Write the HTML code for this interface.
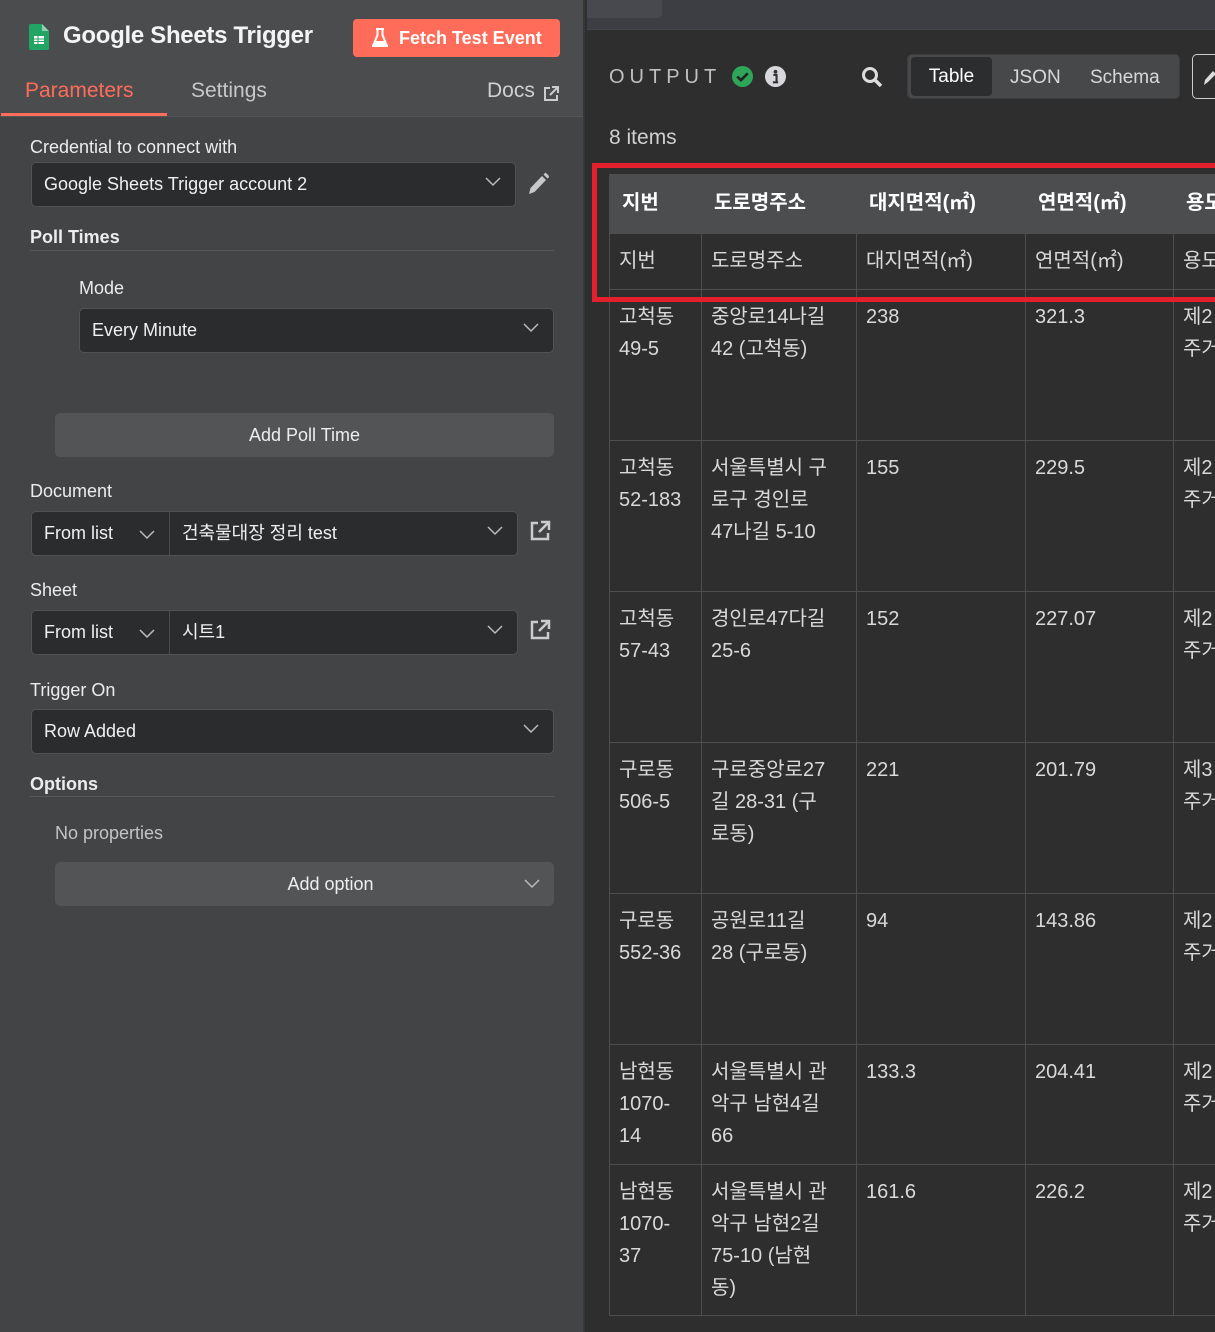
<!DOCTYPE html>
<html><head><meta charset="utf-8">
<style>
*{box-sizing:border-box;margin:0;padding:0}
body{width:1215px;height:1332px;overflow:hidden;background:#2e2e2f;font-family:"Liberation Sans","Noto Sans CJK KR",sans-serif;color:#e8e8e8;position:relative}
.a{position:absolute}
#left{left:0;top:0;width:585px;height:1332px;background:#424446;border-right:2px solid #37383a}
#head{left:0;top:0;width:583px;height:117px;background:#4a4c4e;border-bottom:1px solid #555}
.lbl{font-size:18px;color:#ececec}
.b{font-weight:bold}
.inp{background:#2b2c2d;border:1px solid #505254;border-radius:5px;height:45px;font-size:18px;color:#f0f0f0;padding-left:12px;line-height:43px}
.chev{position:absolute;right:14px;top:14px;width:16px;height:10px}
.btn{background:#525456;border-radius:5px;height:44px;font-size:18px;color:#eee;text-align:center;line-height:44px}
.hr{height:1px;background:#57595b}
table{border-collapse:collapse;font-size:20px;color:#d9d9d9;table-layout:fixed}
td{border:1px solid #4c4e50;vertical-align:top;padding:11px 9px 0 9px;line-height:32px;overflow:hidden;white-space:nowrap}
tr.h td{background:#4b4d4f;font-weight:bold;color:#fff;padding:12px 12px 0;height:59px;border-color:#4b4d4f}
tr.s td{height:56px}
</style></head><body>
<div id="left" class="a"></div>
<div id="head" class="a"></div>
<svg class="a" style="left:29px;top:24px" width="20" height="26" viewBox="0 0 20 26"><path d="M0 2a2 2 0 0 1 2-2h11l7 7v17a2 2 0 0 1-2 2H2a2 2 0 0 1-2-2z" fill="#21a464"/><path d="M13 0v7h7z" fill="#8ed1b1"/><rect x="5" y="12" width="10" height="8" fill="#fff"/><path d="M5 15h10M5 17.5h10M9 12v8" stroke="#21a464" stroke-width="1"/></svg>
<div class="a" style="left:63px;top:22px;font-size:24px;font-weight:bold;color:#f4f4f4;letter-spacing:-0.3px">Google Sheets Trigger</div>
<div class="a" style="left:353px;top:19px;width:207px;height:38px;background:#ff6d5a;border-radius:4px;color:#fff;font-size:18px;font-weight:bold;line-height:38px;padding-left:46px">Fetch Test Event</div>
<svg class="a" style="left:372px;top:28px" width="16" height="20" viewBox="0 0 16 20"><path d="M4 1h8M5.5 1v6L1 18h14L10.5 7V1" fill="none" stroke="#fff" stroke-width="2"/><path d="M3 13h10l2 5H1z" fill="#fff"/></svg>
<div class="a" style="left:25px;top:79px;font-size:21px;color:#ff6d5a">Parameters</div>
<div class="a" style="left:1px;top:113px;width:166px;height:3px;background:#ff6d5a"></div>
<div class="a" style="left:191px;top:79px;font-size:21px;color:#c8c8ca">Settings</div>
<div class="a" style="left:487px;top:79px;font-size:21px;color:#d0d0d2">Docs</div>
<svg class="a" style="left:543px;top:85px" width="17" height="17" viewBox="0 0 17 17"><path d="M7 3H2v12h12v-5M9 2h6v6M15 2L7 10" fill="none" stroke="#ccc" stroke-width="2"/></svg>

<div class="a lbl" style="left:30px;top:137px">Credential to connect with</div>
<div class="a inp" style="left:31px;top:162px;width:485px">Google Sheets Trigger account 2<svg class="chev" viewBox="0 0 16 10"><path d="M1 1l7 7 7-7" fill="none" stroke="#bbb" stroke-width="1.5"/></svg></div>
<svg class="a" style="left:527px;top:172px" width="22" height="24" viewBox="0 0 22 24"><path d="M2 22l1.5-6L15 4l4 4L7.5 20z M16.5 2.5l2-2 4 4-2 2z" fill="#c8c8ca"/></svg>
<div class="a lbl b" style="left:30px;top:227px">Poll Times</div>
<div class="a hr" style="left:30px;top:250px;width:524px"></div>
<div class="a lbl" style="left:79px;top:278px">Mode</div>
<div class="a inp" style="left:79px;top:308px;width:475px">Every Minute<svg class="chev" viewBox="0 0 16 10"><path d="M1 1l7 7 7-7" fill="none" stroke="#bbb" stroke-width="1.5"/></svg></div>
<div class="a btn" style="left:55px;top:413px;width:499px">Add Poll Time</div>

<div class="a lbl" style="left:30px;top:481px">Document</div>
<div class="a inp" style="left:31px;top:511px;width:487px;padding:0"><span style="position:absolute;left:12px">From list</span><svg class="a" style="left:107px;top:18px" width="16" height="10" viewBox="0 0 16 10"><path d="M1 1l7 7 7-7" fill="none" stroke="#bbb" stroke-width="1.5"/></svg><div class="a" style="left:137px;top:0;width:1px;height:43px;background:#4a4c4e"></div><span style="position:absolute;left:150px">건축물대장 정리 test</span><svg class="chev" viewBox="0 0 16 10"><path d="M1 1l7 7 7-7" fill="none" stroke="#bbb" stroke-width="1.5"/></svg></div>
<svg class="a" style="left:529px;top:520px" width="22" height="22" viewBox="0 0 22 22"><path d="M9 3H3v16h16v-6M12 2h8v8M20 2L10 12" fill="none" stroke="#ccc" stroke-width="2.5"/></svg>
<div class="a lbl" style="left:30px;top:580px">Sheet</div>
<div class="a inp" style="left:31px;top:610px;width:487px;padding:0"><span style="position:absolute;left:12px">From list</span><svg class="a" style="left:107px;top:18px" width="16" height="10" viewBox="0 0 16 10"><path d="M1 1l7 7 7-7" fill="none" stroke="#bbb" stroke-width="1.5"/></svg><div class="a" style="left:137px;top:0;width:1px;height:43px;background:#4a4c4e"></div><span style="position:absolute;left:150px">시트1</span><svg class="chev" viewBox="0 0 16 10"><path d="M1 1l7 7 7-7" fill="none" stroke="#bbb" stroke-width="1.5"/></svg></div>
<svg class="a" style="left:529px;top:619px" width="22" height="22" viewBox="0 0 22 22"><path d="M9 3H3v16h16v-6M12 2h8v8M20 2L10 12" fill="none" stroke="#ccc" stroke-width="2.5"/></svg>
<div class="a lbl" style="left:30px;top:680px">Trigger On</div>
<div class="a inp" style="left:31px;top:709px;width:523px">Row Added<svg class="chev" viewBox="0 0 16 10"><path d="M1 1l7 7 7-7" fill="none" stroke="#bbb" stroke-width="1.5"/></svg></div>
<div class="a lbl b" style="left:30px;top:774px">Options</div>
<div class="a hr" style="left:30px;top:796px;width:524px"></div>
<div class="a" style="left:55px;top:823px;font-size:18px;color:#c4c4c4">No properties</div>
<div class="a btn" style="left:55px;top:862px;width:499px;padding-left:52px">Add option<svg class="a" style="right:14px;top:17px" width="16" height="10" viewBox="0 0 16 10"><path d="M1 1l7 7 7-7" fill="none" stroke="#bbb" stroke-width="1.5"/></svg></div>

<!-- right -->
<div class="a" style="left:587px;top:0;width:628px;height:30px;background:#3d3d44;border-bottom:1px solid #46464c"></div>
<div class="a" style="left:587px;top:0;width:75px;height:18px;background:#48484f;border-radius:0 0 4px 0"></div>
<div class="a" style="left:609px;top:66px;font-size:20px;letter-spacing:5px;color:#c0c0c0">OUTPUT</div>
<svg class="a" style="left:732px;top:66px" width="21" height="21" viewBox="0 0 20 20"><circle cx="10" cy="10" r="10" fill="#2ea65a"/><path d="M5 10l3.5 3.5L15 7" fill="none" stroke="#222" stroke-width="2.5"/></svg>
<svg class="a" style="left:765px;top:66px" width="21" height="21" viewBox="0 0 20 20"><circle cx="10" cy="10" r="10" fill="#d8d8dc"/><circle cx="10" cy="5.5" r="1.8" fill="#333"/><path d="M8 8.5h3v7h1.5M7.5 15.5h5" stroke="#333" stroke-width="2" fill="none"/></svg>
<svg class="a" style="left:861px;top:66px" width="22" height="22" viewBox="0 0 22 22"><circle cx="9" cy="9" r="6.5" fill="none" stroke="#ddd" stroke-width="3"/><path d="M14 14l6 6" stroke="#ddd" stroke-width="3.5"/></svg>
<div class="a" style="left:907px;top:54px;width:273px;height:45px;background:#474849;border-radius:5px;border:1px solid #3c3d3e"></div>
<div class="a" style="left:911px;top:57px;width:81px;height:39px;background:#2c2d2e;border-radius:4px;color:#fff;font-size:19px;text-align:center;line-height:39px">Table</div>
<div class="a" style="left:1010px;top:67px;font-size:19px;color:#d8d8d8">JSON</div>
<div class="a" style="left:1090px;top:67px;font-size:19px;color:#d8d8d8">Schema</div>
<div class="a" style="left:1192px;top:54px;width:40px;height:45px;border:1px solid #ccc;border-radius:5px"></div>
<svg class="a" style="left:1203px;top:68px" width="14" height="18" viewBox="0 0 14 18"><path d="M1 17l1-5L10 3l3 3-8 8z" fill="#ddd"/></svg>
<div class="a" style="left:609px;top:126px;font-size:21px;color:#d0d0d0">8 items</div>

<table class="a" style="left:609px;top:174px;width:640px">
<colgroup><col style="width:92px"><col style="width:155px"><col style="width:169px"><col style="width:148px"><col style="width:76px"></colgroup>
<tr class="h"><td>지번</td><td>도로명주소</td><td>대지면적(㎡)</td><td>연면적(㎡)</td><td>용도</td></tr>
<tr class="s"><td>지번</td><td>도로명주소</td><td>대지면적(㎡)</td><td>연면적(㎡)</td><td>용도</td></tr>
<tr style="height:151px"><td>고척동<br>49-5</td><td>중앙로14나길<br>42 (고척동)</td><td>238</td><td>321.3</td><td>제2<br>주거</td></tr>
<tr style="height:151px"><td>고척동<br>52-183</td><td>서울특별시 구<br>로구 경인로<br>47나길 5-10</td><td>155</td><td>229.5</td><td>제2<br>주거</td></tr>
<tr style="height:151px"><td>고척동<br>57-43</td><td>경인로47다길<br>25-6</td><td>152</td><td>227.07</td><td>제2<br>주거</td></tr>
<tr style="height:151px"><td>구로동<br>506-5</td><td>구로중앙로27<br>길 28-31 (구<br>로동)</td><td>221</td><td>201.79</td><td>제3<br>주거</td></tr>
<tr style="height:151px"><td>구로동<br>552-36</td><td>공원로11길<br>28 (구로동)</td><td>94</td><td>143.86</td><td>제2<br>주거</td></tr>
<tr style="height:120px"><td>남현동<br>1070-<br>14</td><td>서울특별시 관<br>악구 남현4길<br>66</td><td>133.3</td><td>204.41</td><td>제2<br>주거</td></tr>
<tr style="height:151px"><td>남현동<br>1070-<br>37</td><td>서울특별시 관<br>악구 남현2길<br>75-10 (남현<br>동)</td><td>161.6</td><td>226.2</td><td>제2<br>주거</td></tr>
</table>
<div class="a" style="left:592px;top:163px;width:640px;height:139px;border:5px solid #e3202b"></div>
</body></html>
